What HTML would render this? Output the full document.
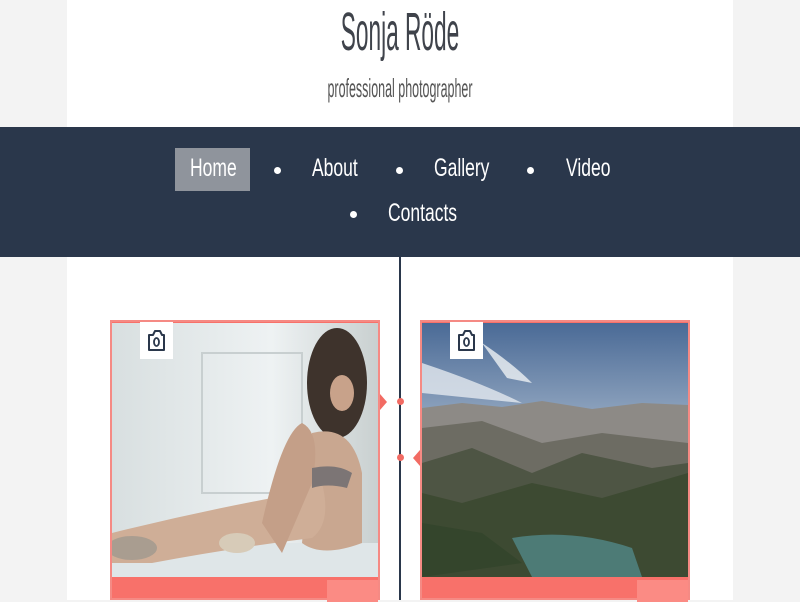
<!DOCTYPE html>
<html><head><meta charset="utf-8"><style>
*{margin:0;padding:0;box-sizing:border-box}
html,body{width:800px;height:600px;overflow:hidden;background:#f3f3f3;font-family:"Liberation Sans",sans-serif}
.col{position:absolute;left:67px;top:0;width:666px;height:600px;background:#fff}
.t1{position:absolute;left:0;width:800px;top:1px;text-align:center;font-size:54px;color:#3f434b;transform:scaleX(.42);line-height:62px}
.t2{position:absolute;left:0;width:800px;top:73px;text-align:center;font-size:26px;color:#555;transform:scaleX(.48);line-height:30px}
.nav{position:absolute;left:0;top:127px;width:800px;height:130px;background:#2a374b}
.nav span{position:absolute;color:#fff;font-size:25px;line-height:30px;transform:scaleX(.7);transform-origin:left}
.home{position:absolute;left:175px;top:148px;width:75px;height:43px;background:#8f949c}
.dot{position:absolute;width:7px;height:7px;border-radius:50%;background:#fff}
.line{position:absolute;left:399px;top:257px;width:2px;height:343px;background:#2a374b}
.card{position:absolute;top:320px;width:270px;height:280px;background:#f8716a;border:2px solid #f58a84}
.img{position:absolute;left:0;top:1px;width:266px;height:254px;overflow:hidden}
.bar2{position:absolute;right:0;top:258px;width:51px;height:22px;background:#fb8b84}
.cam{position:absolute;left:28px;top:0;width:33px;height:37px;background:#fff}
.arr{position:absolute;width:0;height:0;border-top:8px solid transparent;border-bottom:8px solid transparent}
.pd{position:absolute;width:7px;height:7px;border-radius:50%;background:#f26b63}
</style></head><body>
<div class="col"></div>
<div class="t1">Sonja Röde</div>
<div class="t2">professional photographer</div>
<div class="nav"></div>
<div class="home"></div>
<div class="nav" style="background:none">
<span style="left:190px;top:26px">Home</span>
<span style="left:312px;top:26px">About</span>
<span style="left:434px;top:26px">Gallery</span>
<span style="left:566px;top:26px">Video</span>
<span style="left:388px;top:71px">Contacts</span>
</div>
<div class="dot" style="left:274px;top:167px"></div>
<div class="dot" style="left:396px;top:167px"></div>
<div class="dot" style="left:527px;top:167px"></div>
<div class="dot" style="left:350px;top:211px"></div>
<div class="line"></div>
<div class="pd" style="left:397px;top:398px"></div>
<div class="pd" style="left:397px;top:454px"></div>
<div class="arr" style="left:380px;top:394px;border-left:7px solid #f26b63"></div>
<div class="arr" style="left:413px;top:450px;border-right:7px solid #f26b63"></div>

<div class="card" style="left:110px">
<div class="img"><svg width="266" height="254">
<defs><linearGradient id="w" x1="0" y1="0" x2="1" y2="0"><stop offset="0" stop-color="#d8dfe0"/><stop offset=".6" stop-color="#eef2f3"/><stop offset="1" stop-color="#c9d0d0"/></linearGradient></defs>
<rect width="266" height="254" fill="url(#w)"/>
<rect x="90" y="30" width="100" height="140" fill="none" stroke="#c8cfd0" stroke-width="2"/>
<rect x="0" y="220" width="266" height="34" fill="#dfe6e8"/>
<ellipse cx="225" cy="60" rx="30" ry="55" fill="#3e332c"/>
<ellipse cx="230" cy="70" rx="12" ry="18" fill="#c8a28a"/>
<path d="M200 110 Q240 100 250 150 L250 220 Q210 235 190 220 Z" fill="#c9a790"/>
<path d="M0 210 Q80 190 160 175 L210 160 Q220 200 200 215 Q120 225 40 240 L0 240Z" fill="#cfae97"/>
<path d="M150 200 Q170 110 190 100 Q210 110 200 160 L170 230 Z" fill="#c49f88"/>
<path d="M200 145 Q225 140 240 150 L235 165 Q215 160 200 165Z" fill="#7c7575"/>
<ellipse cx="20" cy="225" rx="25" ry="12" fill="#a99d90"/>
<ellipse cx="125" cy="220" rx="18" ry="10" fill="#d7cbb8"/>
</svg></div>
<div class="bar2"></div>
<div class="cam"><svg width="33" height="37"><path d="M9 13 L13 13 L15 9 L20 9 L22 13 L24 13 L24 28 L9 28 Z" fill="none" stroke="#2a374b" stroke-width="2" stroke-linejoin="round"/><ellipse cx="16.5" cy="20" rx="2.5" ry="4" fill="none" stroke="#2a374b" stroke-width="1.8"/></svg></div>
</div>

<div class="card" style="left:420px">
<div class="img"><svg width="266" height="254">
<defs><linearGradient id="s" x1="0" y1="0" x2="0" y2="1"><stop offset="0" stop-color="#4a6a96"/><stop offset=".5" stop-color="#a8b9cd"/><stop offset="1" stop-color="#d6dadb"/></linearGradient></defs>
<rect width="266" height="254" fill="url(#s)"/>
<path d="M0 40 Q60 60 100 80 L0 70Z" fill="#e4e9ef" opacity=".8"/>
<path d="M60 20 Q90 40 110 60 L85 55Z" fill="#eef1f4" opacity=".8"/>
<path d="M0 85 L40 80 L80 84 L120 78 L170 86 L220 80 L266 82 L266 254 L0 254Z" fill="#8d8a86"/>
<path d="M0 105 L60 98 L120 120 L180 110 L266 120 L266 254 L0 254Z" fill="#6d6c63"/>
<path d="M0 140 L50 125 L110 150 L160 130 L230 145 L266 140 L266 254 L0 254Z" fill="#4e5544"/>
<path d="M0 170 L40 180 L110 160 L180 175 L266 150 L266 254 L0 254Z" fill="#3d4a32"/>
<path d="M90 215 Q150 205 210 225 L220 254 L110 254Z" fill="#4d7b76"/>
<path d="M0 200 L60 210 L100 240 L0 254Z" fill="#34452c"/>
</svg></div>
<div class="bar2"></div>
<div class="cam"><svg width="33" height="37"><path d="M9 13 L13 13 L15 9 L20 9 L22 13 L24 13 L24 28 L9 28 Z" fill="none" stroke="#2a374b" stroke-width="2" stroke-linejoin="round"/><ellipse cx="16.5" cy="20" rx="2.5" ry="4" fill="none" stroke="#2a374b" stroke-width="1.8"/></svg></div>
</div>
</body></html>
